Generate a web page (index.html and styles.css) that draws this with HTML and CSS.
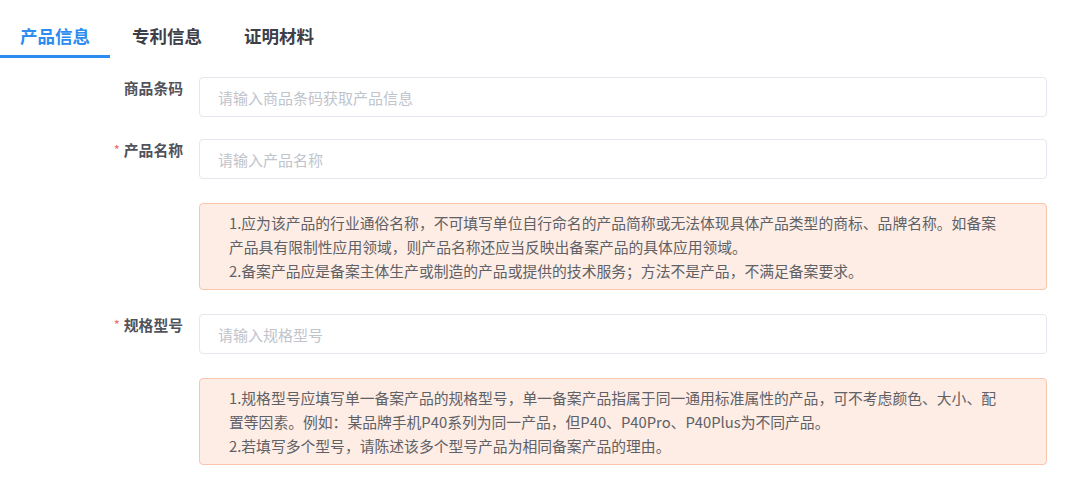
FILE: index.html
```html
<!DOCTYPE html>
<html lang="zh-CN">
<head>
<meta charset="utf-8">
<title>产品信息</title>
<link rel="stylesheet" href="styles.css">
</head>
<body>
<div class="tabs">
  <div class="tab active">产品信息</div>
  <div class="tab">专利信息</div>
  <div class="tab">证明材料</div>
</div>
<form class="form">
  <div class="row row-first">
    <label class="label">商品条码</label>
    <div class="content">
      <input class="input" type="text" placeholder="请输入商品条码获取产品信息">
    </div>
  </div>
  <div class="row">
    <label class="label"><span class="req">*</span>产品名称</label>
    <div class="content">
      <input class="input" type="text" placeholder="请输入产品名称">
      <div class="alert">1.应为该产品的行业通俗名称，不可填写单位自行命名的产品简称或无法体现具体产品类型的商标、品牌名称。如备案<br>产品具有限制性应用领域，则产品名称还应当反映出备案产品的具体应用领域。<br>2.备案产品应是备案主体生产或制造的产品或提供的技术服务；方法不是产品，不满足备案要求。</div>
    </div>
  </div>
  <div class="row">
    <label class="label"><span class="req">*</span>规格型号</label>
    <div class="content">
      <input class="input" type="text" placeholder="请输入规格型号">
      <div class="alert">1.规格型号应填写单一备案产品的规格型号，单一备案产品指属于同一通用标准属性的产品，可不考虑颜色、大小、配<br>置等因素。例如：某品牌手机P40系列为同一产品，但P40、P40Pro、P40Plus为不同产品。<br>2.若填写多个型号，请陈述该多个型号产品为相同备案产品的理由。</div>
    </div>
  </div>
</form>
</body>
</html>
```

FILE: styles.css
```css
* { box-sizing: border-box; }
html, body { margin: 0; padding: 0; background: #ffffff; }
body {
  font-family: "Microsoft YaHei", "Noto Sans CJK SC", "Noto Sans", sans-serif;
  color: #606266;
  width: 1080px;
  height: 484px;
  overflow: hidden;
}
.tabs {
  display: flex;
  gap: 2px;
}
.tab {
  padding: 16px 20px 0;
  height: 58px;
  line-height: 40px;
  font-size: 17.5px;
  font-weight: 700;
  color: #3d4049;
  border-bottom: 3px solid transparent;
  white-space: nowrap;
}
.tab.active {
  color: #2d8cf0;
  border-bottom-color: #2d8cf0;
}
.form {
  margin-top: 19px;
}
.row {
  display: flex;
  margin-top: 24px;
}
.row-first { margin-top: 0; margin-bottom: -2px; }
.label {
  width: 199px;
  flex: none;
  padding-right: 16px;
  text-align: right;
  font-size: 14.8px;
  line-height: 22px;
  font-weight: 700;
  color: #50535b;
  white-space: nowrap;
}
.req {
  color: #f56c6c;
  font-weight: 400;
  font-size: 13px;
  margin-right: 4px;
  vertical-align: 1px;
}
.content {
  width: 848px;
  flex: none;
  display: flex;
  flex-direction: column;
  gap: 24px;
}
.input {
  display: block;
  width: 100%;
  height: 40px;
  border: 1px solid #e4e7ed;
  border-radius: 4px;
  padding: 0 18px;
  font-family: inherit;
  font-size: 15px;
  color: #606266;
  outline: none;
  background: #fff;
}
.input::placeholder { color: #c0c4cc; }
.alert {
  background: #fdede5;
  border: 1px solid #f9c5ab;
  border-radius: 4px;
  padding: 7px 20px 6px 29px;
  font-size: 14.8px;
  line-height: 24px;
  color: #5f6166;
  white-space: nowrap;
}
```
